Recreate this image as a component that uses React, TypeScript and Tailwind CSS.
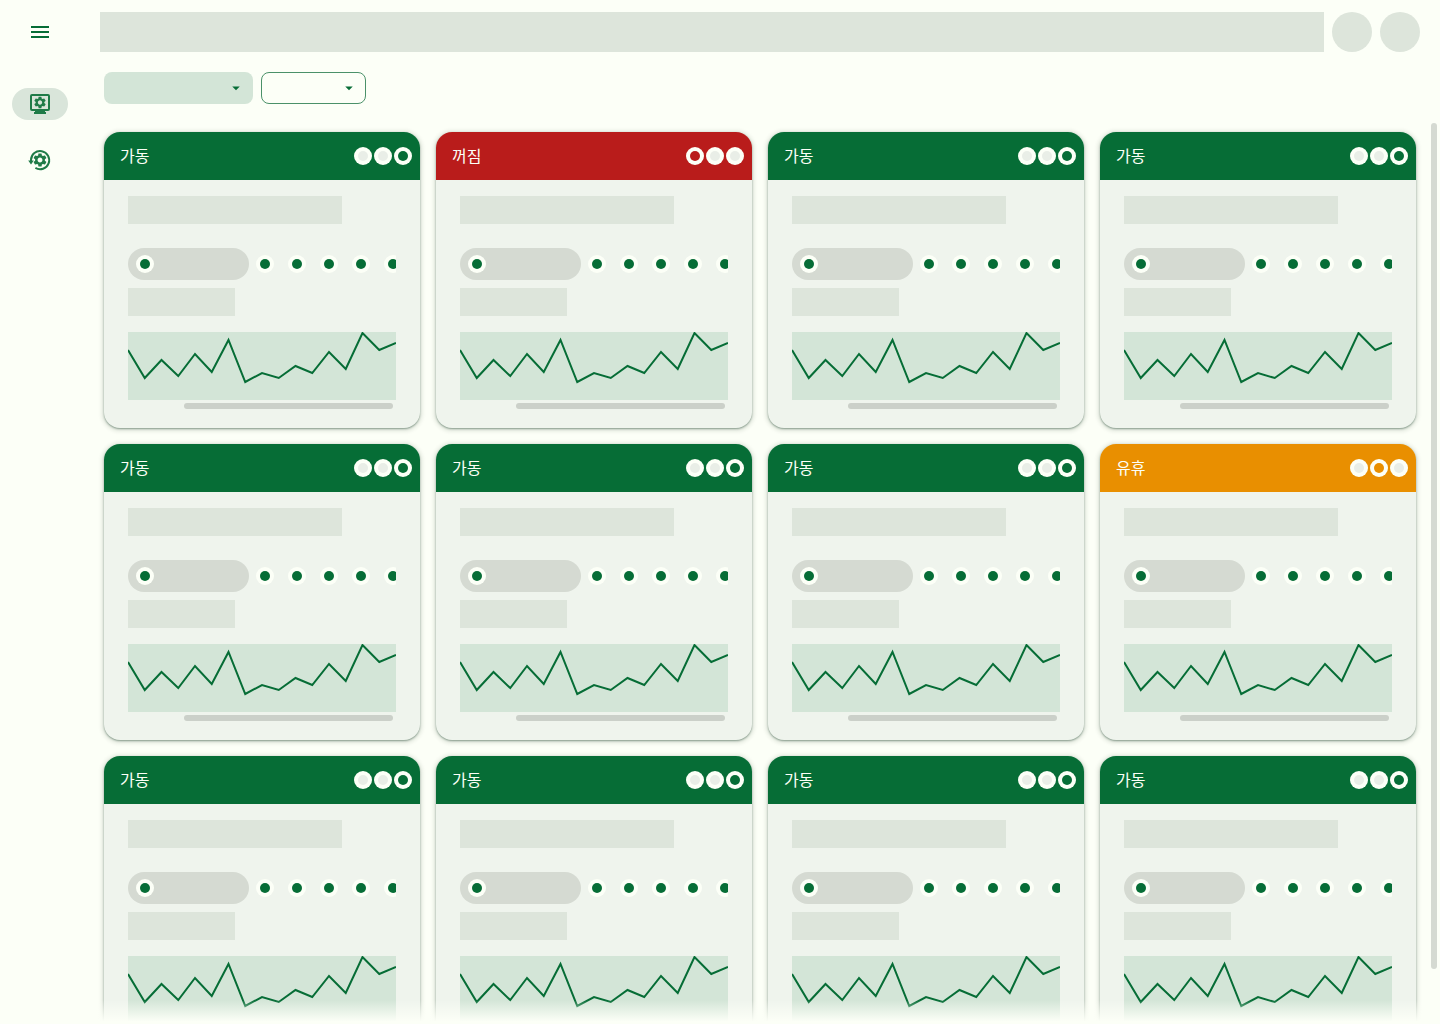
import React, { useState } from 'react';
import { MdArrowDropDown, MdMenu } from 'react-icons/md';

type TStatus = 'off' | 'idle' | 'running';

const STATUS: Record<TStatus, { label: string; bg: string }> = {
  off: { label: '꺼짐', bg: 'bg-[#b91c1b]' },
  idle: { label: '유휴', bg: 'bg-[#e98f00]' },
  running: { label: '가동', bg: 'bg-[#066d36]' },
};

const LAMPS: TStatus[] = ['off', 'idle', 'running'];

const MACHINES: TStatus[] = [
  'running',
  'off',
  'running',
  'running',
  'running',
  'running',
  'running',
  'idle',
  'running',
  'running',
  'running',
  'running',
];

const SERIES = [18, 46, 28, 44, 22, 40, 8, 50, 41, 46, 34, 41, 20, 37, 1, 18, 11];

const GEAR =
  'M19.14 12.94c.04-.3.06-.61.06-.94 0-.32-.02-.64-.07-.94l2.03-1.58a.49.49 0 0 0 .12-.61l-1.92-3.32a.488.488 0 0 0-.59-.22l-2.39.96c-.5-.38-1.03-.7-1.62-.94l-.36-2.54a.484.484 0 0 0-.48-.41h-3.84c-.24 0-.43.17-.47.41l-.36 2.54c-.59.24-1.13.57-1.62.94l-2.39-.96c-.22-.08-.47 0-.59.22L2.74 8.87c-.12.21-.08.47.12.61l2.03 1.58c-.05.3-.09.63-.09.94s.02.64.07.94l-2.03 1.58a.49.49 0 0 0-.12.61l1.92 3.32c.12.22.37.29.59.22l2.39-.96c.5.38 1.03.7 1.62.94l.36 2.54c.05.24.24.41.48.41h3.84c.24 0 .44-.17.47-.41l.36-2.54c.59-.24 1.13-.56 1.62-.94l2.39.96c.22.08.47 0 .59-.22l1.92-3.32c.12-.22.07-.47-.12-.61l-2.01-1.58zM12 15.6c-1.98 0-3.6-1.62-3.6-3.6s1.62-3.6 3.6-3.6 3.6 1.62 3.6 3.6-1.62 3.6-3.6 3.6z';

function MonitorGearIcon() {
  return (
    <svg viewBox="0 0 24 24" className="size-6" fill="currentColor" aria-hidden>
      <rect
        x="3"
        y="3"
        width="18"
        height="15"
        rx="1"
        fill="none"
        stroke="currentColor"
        strokeWidth="2"
      />
      <path d="M7 18h10v2h1v2H6v-2h1z" />
      <path d={GEAR} transform="translate(4.8 3.3) scale(.6)" />
    </svg>
  );
}

function HistoryGearIcon() {
  return (
    <svg viewBox="0 0 24 24" className="size-6" fill="currentColor" aria-hidden>
      <path
        d="M3 13v-1a9.1 9.1 0 1 1 4.4 7.9"
        fill="none"
        stroke="currentColor"
        strokeWidth="2"
      />
      <path d="M.2 12.4h5.6L3 16.4z" />
      <path d={GEAR} transform="translate(3.84 3.84) scale(.68)" />
    </svg>
  );
}

function Dot({ color }: { color: string }) {
  return (
    <span className="flex size-[18px] shrink-0 items-center justify-center rounded-full bg-[#fcfff7]">
      <span className={`size-2.5 rounded-full ${color}`} />
    </span>
  );
}

function FilterSelect({ label, className }: { label: string; className: string }) {
  return (
    <div className="relative">
      <select
        aria-label={label}
        className={`block h-8 appearance-none rounded-lg ${className}`}
      >
        <option value="" />
      </select>
      <MdArrowDropDown
        size={18}
        className="pointer-events-none absolute right-2 top-[7px] text-[#066d36]"
      />
    </div>
  );
}

function Chart() {
  const points = SERIES.map((y, i) => `${i * 16.75},${y}`).join(' ');

  return (
    <svg
      viewBox="0 0 268 68"
      preserveAspectRatio="none"
      className="mt-4 block h-17 w-full bg-[#d3e5d7]"
      aria-hidden
    >
      <polyline
        points={points}
        fill="none"
        stroke="#066d36"
        strokeWidth="2"
        vectorEffect="non-scaling-stroke"
      />
    </svg>
  );
}

function MachineCard({ status }: { status: TStatus }) {
  const { label, bg } = STATUS[status];

  return (
    <article className="overflow-hidden rounded-2xl bg-[#eff4ed] shadow-[0_1px_2px_rgba(0,40,20,0.4),0_1px_4px_2px_rgba(0,40,20,0.12)]">
      <header className={`flex h-12 items-center justify-between pl-4 pr-2 ${bg}`}>
        <h2 className="pb-0.5 text-base text-[#fcfff7]">{label}</h2>
        <div className="flex gap-0.5">
          {LAMPS.map((lamp) => (
            <Dot key={lamp} color={lamp === status ? bg : 'bg-[#e9eee7]'} />
          ))}
        </div>
      </header>
      <div className="px-6 pb-[19px] pt-4">
        <div className="h-7 w-4/5 bg-[#dde5db]" />
        <div className="mt-6 flex h-8 overflow-hidden">
          <div className="flex w-[121px] shrink-0 items-center rounded-full bg-[#d5dad2] pl-2">
            <Dot color="bg-[#066d36]" />
          </div>
          {[0, 1, 2, 3, 4].map((i) => (
            <div key={i} className="flex w-8 shrink-0 items-center justify-center">
              <Dot color="bg-[#066d36]" />
            </div>
          ))}
        </div>
        <div className="mt-2 h-7 w-2/5 bg-[#dde5db]" />
        <Chart />
        <div className="ml-14 mr-[3px] mt-[3px] h-1.5 rounded-full bg-[#cbd0c9]" />
      </div>
    </article>
  );
}

export default function App() {
  const [page, setPage] = useState('machines');

  const navClass = (name: string) =>
    `flex h-8 w-14 items-center justify-center rounded-full text-[#1f7b48] ${
      page === name ? 'bg-[#d9e5da]' : ''
    }`;

  return (
    <div className="relative flex h-screen overflow-hidden bg-[#fcfff7] font-['Noto_Sans_CJK_KR',sans-serif]">
      <nav className="flex w-20 shrink-0 flex-col items-center pt-5">
        <button type="button" aria-label="메뉴" className="text-[#066d36]">
          <MdMenu size={24} />
        </button>
        <div className="mt-11 flex flex-col gap-6">
          <button
            type="button"
            aria-label="설비"
            className={navClass('machines')}
            onClick={() => setPage('machines')}
          >
            <MonitorGearIcon />
          </button>
          <button
            type="button"
            aria-label="이력"
            className={navClass('history')}
            onClick={() => setPage('history')}
          >
            <HistoryGearIcon />
          </button>
        </div>
      </nav>

      <main className="flex min-w-0 flex-1 flex-col">
        <div className="flex gap-2 pl-5 pr-5 pt-3">
          <div className="h-10 flex-1 bg-[#dde5db]" />
          <div className="size-10 rounded-full bg-[#dde5db]" />
          <div className="size-10 rounded-full bg-[#dde5db]" />
        </div>
        <div className="flex gap-2 pl-6 pt-5">
          <FilterSelect label="상태" className="w-[149px] bg-[#d3e5d7]" />
          <FilterSelect label="정렬" className="w-[105px] border border-[#4a9169]" />
        </div>
        <div className="mt-4 flex min-h-0 flex-1 overflow-hidden">
          <div className="grid flex-1 auto-rows-max grid-cols-4 content-start gap-4 pl-6 pr-[15px] pt-3">
            {MACHINES.map((status, i) => (
              <MachineCard key={i} status={status} />
            ))}
          </div>
          <div className="mb-[55px] mr-[3px] mt-[3px] w-1.5 rounded-full bg-[#d5dad2]" />
        </div>
      </main>

      <div className="pointer-events-none absolute inset-x-0 bottom-0 h-6 bg-linear-to-t from-[#fcfff7] from-10% to-transparent" />
    </div>
  );
}
